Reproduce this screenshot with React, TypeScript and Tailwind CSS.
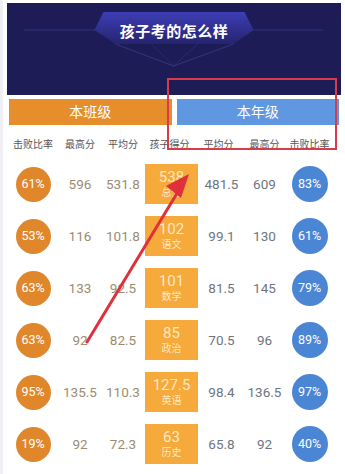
import React from "react";

type Row = {
  classRate: string;
  classMax: string;
  classAvg: string;
  score: string;
  subject: string;
  gradeAvg: string;
  gradeMax: string;
  gradeRate: string;
};

const rows: Row[] = [
  { classRate: "61%", classMax: "596", classAvg: "531.8", score: "538", subject: "总分", gradeAvg: "481.5", gradeMax: "609", gradeRate: "83%" },
  { classRate: "53%", classMax: "116", classAvg: "101.8", score: "102", subject: "语文", gradeAvg: "99.1", gradeMax: "130", gradeRate: "61%" },
  { classRate: "63%", classMax: "133", classAvg: "92.5", score: "101", subject: "数学", gradeAvg: "81.5", gradeMax: "145", gradeRate: "79%" },
  { classRate: "63%", classMax: "92", classAvg: "82.5", score: "85", subject: "政治", gradeAvg: "70.5", gradeMax: "96", gradeRate: "89%" },
  { classRate: "95%", classMax: "135.5", classAvg: "110.3", score: "127.5", subject: "英语", gradeAvg: "98.4", gradeMax: "136.5", gradeRate: "97%" },
  { classRate: "19%", classMax: "92", classAvg: "72.3", score: "63", subject: "历史", gradeAvg: "65.8", gradeMax: "92", gradeRate: "40%" },
];

const cols = "grid grid-cols-[52px_42px_44px_53px_47px_39px_51px]";

const App = () => {
  return (
    <div
      className="relative w-[345px] h-[474px] overflow-hidden bg-white border-l-[3px] border-[#eef0f3]"
      style={{ fontFamily: '"Roboto", "Noto Sans CJK SC", sans-serif' }}
    >
      {/* Header banner */}
      <div className="relative mx-[4px] mt-[3px] h-[92px] bg-[#1d1c56] flex justify-center">
        <svg className="absolute inset-0 w-full h-full" viewBox="7 3 331 92">
          <defs>
            <linearGradient id="ribbon" x1="0" y1="0" x2="0" y2="1">
              <stop offset="0" stopColor="#3d3db6" />
              <stop offset="1" stopColor="#25246f" />
            </linearGradient>
          </defs>
          <line x1="22" y1="30" x2="94" y2="30" stroke="#3a3a86" strokeWidth="0.8" />
          <line x1="252" y1="30" x2="322" y2="30" stroke="#3a3a86" strokeWidth="0.8" />
          <polygon points="102,12 243,12 252,30 232,44 114,44 93,30" fill="url(#ribbon)" />
          <line x1="114" y1="44" x2="172" y2="66" stroke="#3f3f8e" strokeWidth="0.7" />
          <line x1="232" y1="44" x2="172" y2="66" stroke="#3f3f8e" strokeWidth="0.7" />
          <line x1="150" y1="44" x2="172" y2="66" stroke="#34347f" strokeWidth="0.6" />
          <line x1="196" y1="44" x2="172" y2="66" stroke="#34347f" strokeWidth="0.6" />
        </svg>
        <h1 className="relative mt-[18px] h-[22px] text-[15px] leading-[22px] font-bold text-white tracking-[0.5px]">
          孩子考的怎么样
        </h1>
      </div>

      {/* Tabs */}
      <div className="flex gap-[5px] mx-[6px] mt-[4px]">
        <div className="flex-1 h-[26px] bg-[#e68d2c] flex items-center justify-center text-white text-[14px]">
          本班级
        </div>
        <div className="flex-1 h-[26px] bg-[#5f97e0] flex items-center justify-center text-white text-[14px]">
          本年级
        </div>
      </div>

      {/* Column titles */}
      <div className={`${cols} ml-[4px] mt-[13px] text-[10px] leading-[14px] text-[#555]`}>
        <span className="text-center">击败比率</span>
        <span className="text-center">最高分</span>
        <span className="text-center">平均分</span>
        <span className="text-center -ml-[4px]">孩子得分</span>
        <span className="text-center -ml-[6px]">平均分</span>
        <span className="text-center">最高分</span>
        <span className="text-center">击败比率</span>
      </div>

      {/* Score rows */}
      <div className="flex flex-col ml-[4px] mt-[6px]">
        {rows.map((r) => (
          <div key={r.subject} className={`${cols} h-[52px] items-center`}>
            <div className="flex justify-center">
              <div className="w-[35px] h-[35px] rounded-full bg-[#e0872b] flex items-center justify-center text-white text-[12.5px]">
                {r.classRate}
              </div>
            </div>
            <span className="text-center text-[13.5px] text-[#9a8c72]">{r.classMax}</span>
            <span className="text-center text-[13.5px] text-[#9a8c72]">{r.classAvg}</span>
            <div className="flex justify-center">
              <div className="w-[54px] h-[40px] bg-[#f6aa3b] flex flex-col items-center justify-center text-[#fde8c4]">
                <span className="text-[15px] leading-[17px]">{r.score}</span>
                <span className="text-[10px] leading-[14px]">{r.subject}</span>
              </div>
            </div>
            <span className="text-center text-[13.5px] text-[#6e7482]">{r.gradeAvg}</span>
            <span className="text-center text-[13.5px] text-[#6e7482]">{r.gradeMax}</span>
            <div className="flex justify-center">
              <div className="w-[36px] h-[36px] rounded-full bg-[#4b86d5] flex items-center justify-center text-white text-[12.5px]">
                {r.gradeRate}
              </div>
            </div>
          </div>
        ))}
      </div>

      {/* Annotation: red frame */}
      <div className="absolute left-[164px] top-[78px] w-[170px] h-[72px] border-[2.5px] border-[#d83b49]" />

      {/* Annotation: red arrow */}
      <svg className="absolute inset-0 pointer-events-none" width="345" height="474" viewBox="0 0 345 474">
        <line x1="84" y1="342" x2="176" y2="190" stroke="#e0303a" strokeWidth="3" strokeLinecap="round" />
        <polygon points="186,174 163,186 178,198" fill="#e0303a" />
      </svg>
    </div>
  );
};

export default App;
